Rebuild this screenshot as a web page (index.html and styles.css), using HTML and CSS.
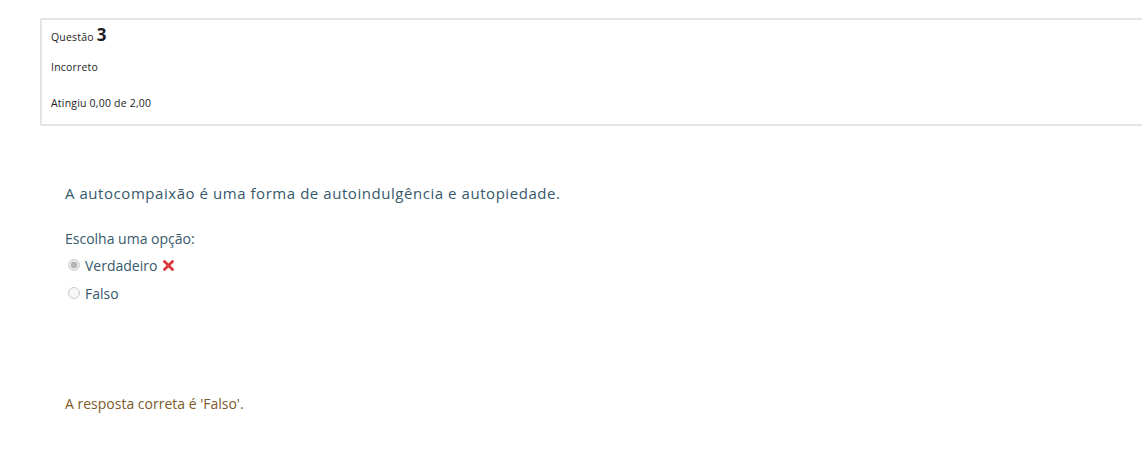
FILE: index.html
```html
<!DOCTYPE html>
<html lang="pt">
<head>
<meta charset="utf-8">
<link rel="stylesheet" href="styles.css">
</head>
<body>
<div class="page">
  <div class="info">
    <h3 class="qno">Questão <span class="num">3</span></h3>
    <div class="state">Incorreto</div>
    <div class="grade">Atingiu 0,00 de 2,00</div>
  </div>
  <div class="content">
    <p class="qtext">A autocompaixão é uma forma de autoindulgência e autopiedade.</p>
    <div class="prompt">Escolha uma opção:</div>
    <div class="answers">
      <div class="opt">
        <span class="radio checked"></span>
        <span class="label">Verdadeiro</span>
        <svg class="xicon" width="11" height="11" viewBox="0 0 11 11"><path d="M1.5 1.5 L9.5 9.5 M9.5 1.5 L1.5 9.5" stroke="#d9363e" stroke-width="2.8" stroke-linecap="round"/></svg>
      </div>
      <div class="opt">
        <span class="radio"></span>
        <span class="label">Falso</span>
      </div>
    </div>
    <div class="feedback">A resposta correta é 'Falso'.</div>
  </div>
</div>
</body>
</html>
```
FILE: styles.css
```css
html, body {
  margin: 0;
  padding: 0;
  background: #fff;
  overflow: hidden;
}
body {
  font-family: "Open Sans", "Noto Sans", sans-serif;
  width: 1142px;
  height: 462px;
}
.page {
  padding: 18px 0 0 40px;
}
.info {
  width: 1120px;
  height: 108px;
  border: 2px solid #e4e4e4;
  border-radius: 2px;
  box-sizing: border-box;
  padding: 6px 0 0 9px;
  color: #1d1d1d;
  font-size: 10.5px;
  letter-spacing: 0.2px;
}
.qno {
  margin: 0;
  font-weight: normal;
  font-size: 10.5px;
  line-height: 18px;
}
.num {
  font-weight: bold;
  font-size: 17px;
}
.state {
  margin-top: 14px;
  line-height: 14px;
}
.grade {
  margin-top: 22px;
  line-height: 14px;
}
.content {
  padding: 57px 0 0 25px;
  color: #36596b;
  font-size: 14px;
}
.qtext {
  margin: 0;
  line-height: 20px;
  font-size: 15px;
  letter-spacing: 0.55px;
}
.prompt {
  margin-top: 26px;
  line-height: 20px;
}
.answers {
  display: flex;
  flex-direction: column;
  gap: 8px;
  margin-top: 6px;
}
.opt {
  display: flex;
  align-items: center;
  height: 20px;
  padding-left: 3px;
}
.radio {
  width: 12px;
  height: 12px;
  border-radius: 50%;
  border: 1px solid #c9c9c9;
  box-sizing: border-box;
  background: #f7f7f7;
  margin-right: 5px;
}
.radio.checked {
  background: radial-gradient(circle, #b5b5b5 0 3px, #e6e6e6 3.5px);
  border-color: #d0d0d0;
}
.xicon {
  margin-left: 6px;
}
.feedback {
  margin-top: 91px;
  color: #7d5a29;
  line-height: 20px;
}
```
